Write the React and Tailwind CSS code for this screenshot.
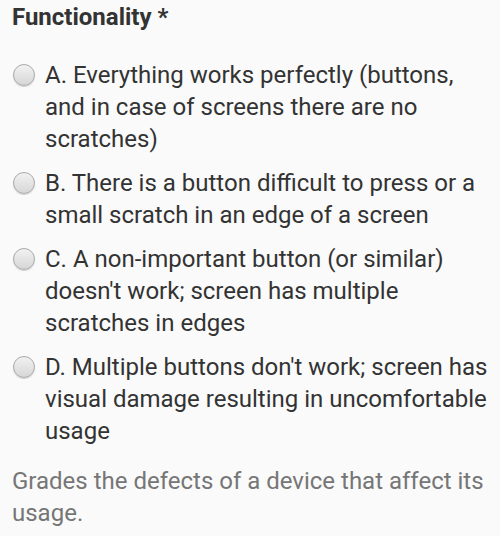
const options = [
  "A. Everything works perfectly (buttons, and in case of screens there are no scratches)",
  "B. There is a button difficult to press or a small scratch in an edge of a screen",
  "C. A non-important button (or similar) doesn't work; screen has multiple scratches in edges",
  "D. Multiple buttons don't work; screen has visual damage resulting in uncomfortable usage",
];

function Radio() {
  return (
    <span className="mt-[5px] block h-[22px] w-[22px] shrink-0 rounded-full border border-[#a9a9a9] bg-gradient-to-b from-[#f2f2f2] to-[#d6d6d6] shadow-[0_1px_1px_rgba(0,0,0,0.15)]" />
  );
}

export default function App() {
  return (
    <div className="min-h-[536px] bg-[#fafafa] px-3 pt-[1px] font-['Roboto',sans-serif] text-[24px] leading-[32px] text-[#333333]">
      <h2 className="font-bold text-[#333333]">Functionality *</h2>

      <div className="mt-[26px] flex flex-col gap-[12px]">
        {options.map((label) => (
          <label key={label} className="flex gap-[10px] pl-[1px]">
            <Radio />
            <span>{label}</span>
          </label>
        ))}
      </div>

      <p className="mt-[18px] text-[#767676]">
        Grades the defects of a device that affect its usage.
      </p>
    </div>
  );
}
